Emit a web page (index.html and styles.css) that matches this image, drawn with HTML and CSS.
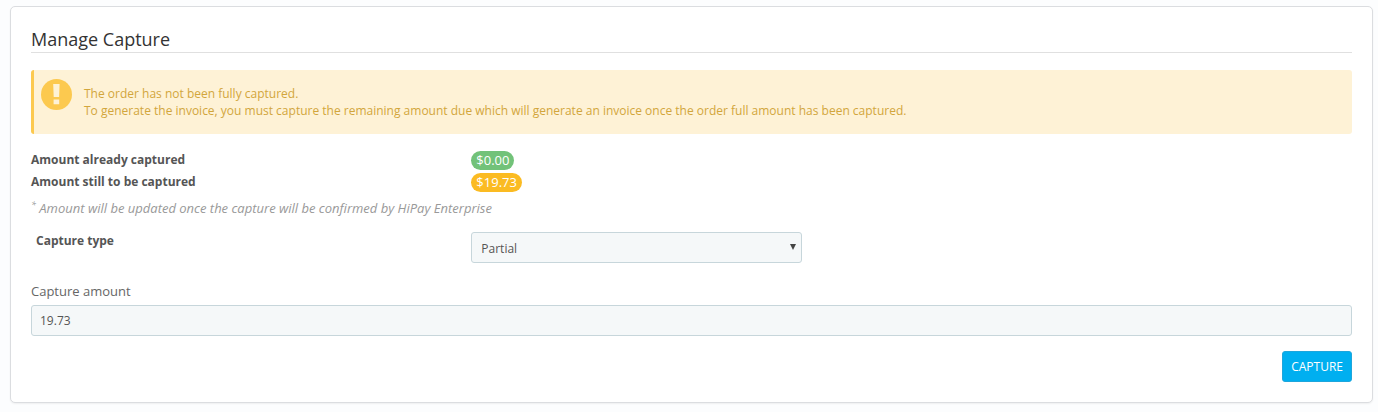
FILE: index.html
```html
<!DOCTYPE html>
<html lang="en">
<head>
<meta charset="utf-8">
<title>Manage Capture</title>
<link rel="stylesheet" href="styles.css">
</head>
<body>
<main class="panel">
  <h1 class="panel-title">Manage Capture</h1>
  <div class="alert" role="alert">
    <svg class="alert-icon" viewBox="0 0 32 32" aria-hidden="true">
      <circle cx="16.5" cy="16.5" r="15.5" fill="#fcc94f"/>
      <path d="M13.2 6h6.4l-.5 13h-5.4zM13.6 21.5h5.6v4.7h-5.6z" fill="#fef2d6"/>
    </svg>
    <p class="alert-text">The order has not been fully captured.<br>To generate the invoice, you must capture the remaining amount due which will generate an invoice once the order full amount has been captured.</p>
  </div>
  <dl class="amounts">
    <dt>Amount already captured</dt>
    <dd><span class="badge badge-success">$0.00</span></dd>
    <dt>Amount still to be captured</dt>
    <dd><span class="badge badge-warning">$19.73</span></dd>
  </dl>
  <p class="note"><sup>*</sup> Amount will be updated once the capture will be confirmed by HiPay Enterprise</p>
  <form class="form">
    <div class="type-row">
      <label class="type-label" for="type">Capture type</label>
      <div class="select-wrap">
        <select class="control select" id="type"><option>Partial</option><option>Full</option></select>
        <svg class="arrow" viewBox="0 0 6 6" aria-hidden="true"><path d="M0 0h6L3 6z" fill="#444"/></svg>
      </div>
    </div>
    <label class="amount-label" for="amount">Capture amount</label>
    <input class="control input" id="amount" type="text" value="19.73">
    <button class="button" type="button">CAPTURE</button>
  </form>
</main>
</body>
</html>
```

FILE: styles.css
```css
* { box-sizing: border-box; }
body {
  margin: 0;
  padding: 6px 5px 9px 10px;
  background: #fcfdfe;
  color: #555;
  font: 12px/17px "Open Sans", sans-serif;
}
.panel {
  padding: 20px;
  background: #fff;
  border: 1px solid #dbdde0;
  border-radius: 5px;
  box-shadow: 0 1px 2px rgba(0, 0, 0, .06);
}
.panel-title {
  margin: 0 0 17px;
  padding-bottom: 1px;
  border-bottom: 1px solid #e0e0e0;
  color: #333;
  font-size: 18px;
  font-weight: 400;
  line-height: 24px;
}
.alert {
  display: flex;
  gap: 12px;
  min-height: 64px;
  padding: 8px 12px 8px 6px;
  background: #fef2d6;
  border-left: 3px solid #fcc94f;
  border-radius: 3px;
  color: #d2a63c;
}
.alert-icon { flex: none; width: 32px; height: 32px; }
.alert-text { margin: 7px 0; }
.amounts {
  display: grid;
  grid-template-columns: 1fr 2fr;
  margin: 15px 0 7px;
  line-height: 22px;
}
.amounts dt { font-weight: 700; }
.amounts dd { display: flex; align-items: center; margin: 0; }
.badge {
  padding: 0 5px;
  border-radius: 10px;
  color: #fff;
  font-size: 13px;
  line-height: 19px;
}
.badge-success { background: #72c279; }
.badge-warning { background: #fbbb22; }
.note {
  margin: 0 0 15px;
  color: #999;
  font-size: 13px;
  font-style: italic;
}
.note sup { font-size: 9px; line-height: 0; }
.form { display: flex; flex-direction: column; }
.type-row { display: grid; grid-template-columns: 4fr 3fr 5fr; margin-bottom: 20px; }
.type-label { padding-left: 5px; font-weight: 700; }
.select-wrap { position: relative; }
.control {
  width: 100%;
  height: 31px;
  margin: 0;
  padding: 0 8px;
  background: #f5f8f9;
  border: 1px solid #c7d6db;
  border-radius: 3px;
  color: #555;
  font: inherit;
}
.select { padding: 2px 9px 0; appearance: none; }
.arrow {
  position: absolute;
  top: 12px;
  right: 6px;
  width: 6px;
  height: 6px;
  pointer-events: none;
}
.amount-label { margin-bottom: 5px; color: #666; font-size: 13px; }
.button {
  align-self: flex-end;
  height: 31px;
  margin-top: 15px;
  padding: 0 8px;
  background: #00aff0;
  border: 1px solid #1ea6dc;
  border-radius: 3px;
  color: #fff;
  font: inherit;
}
```
